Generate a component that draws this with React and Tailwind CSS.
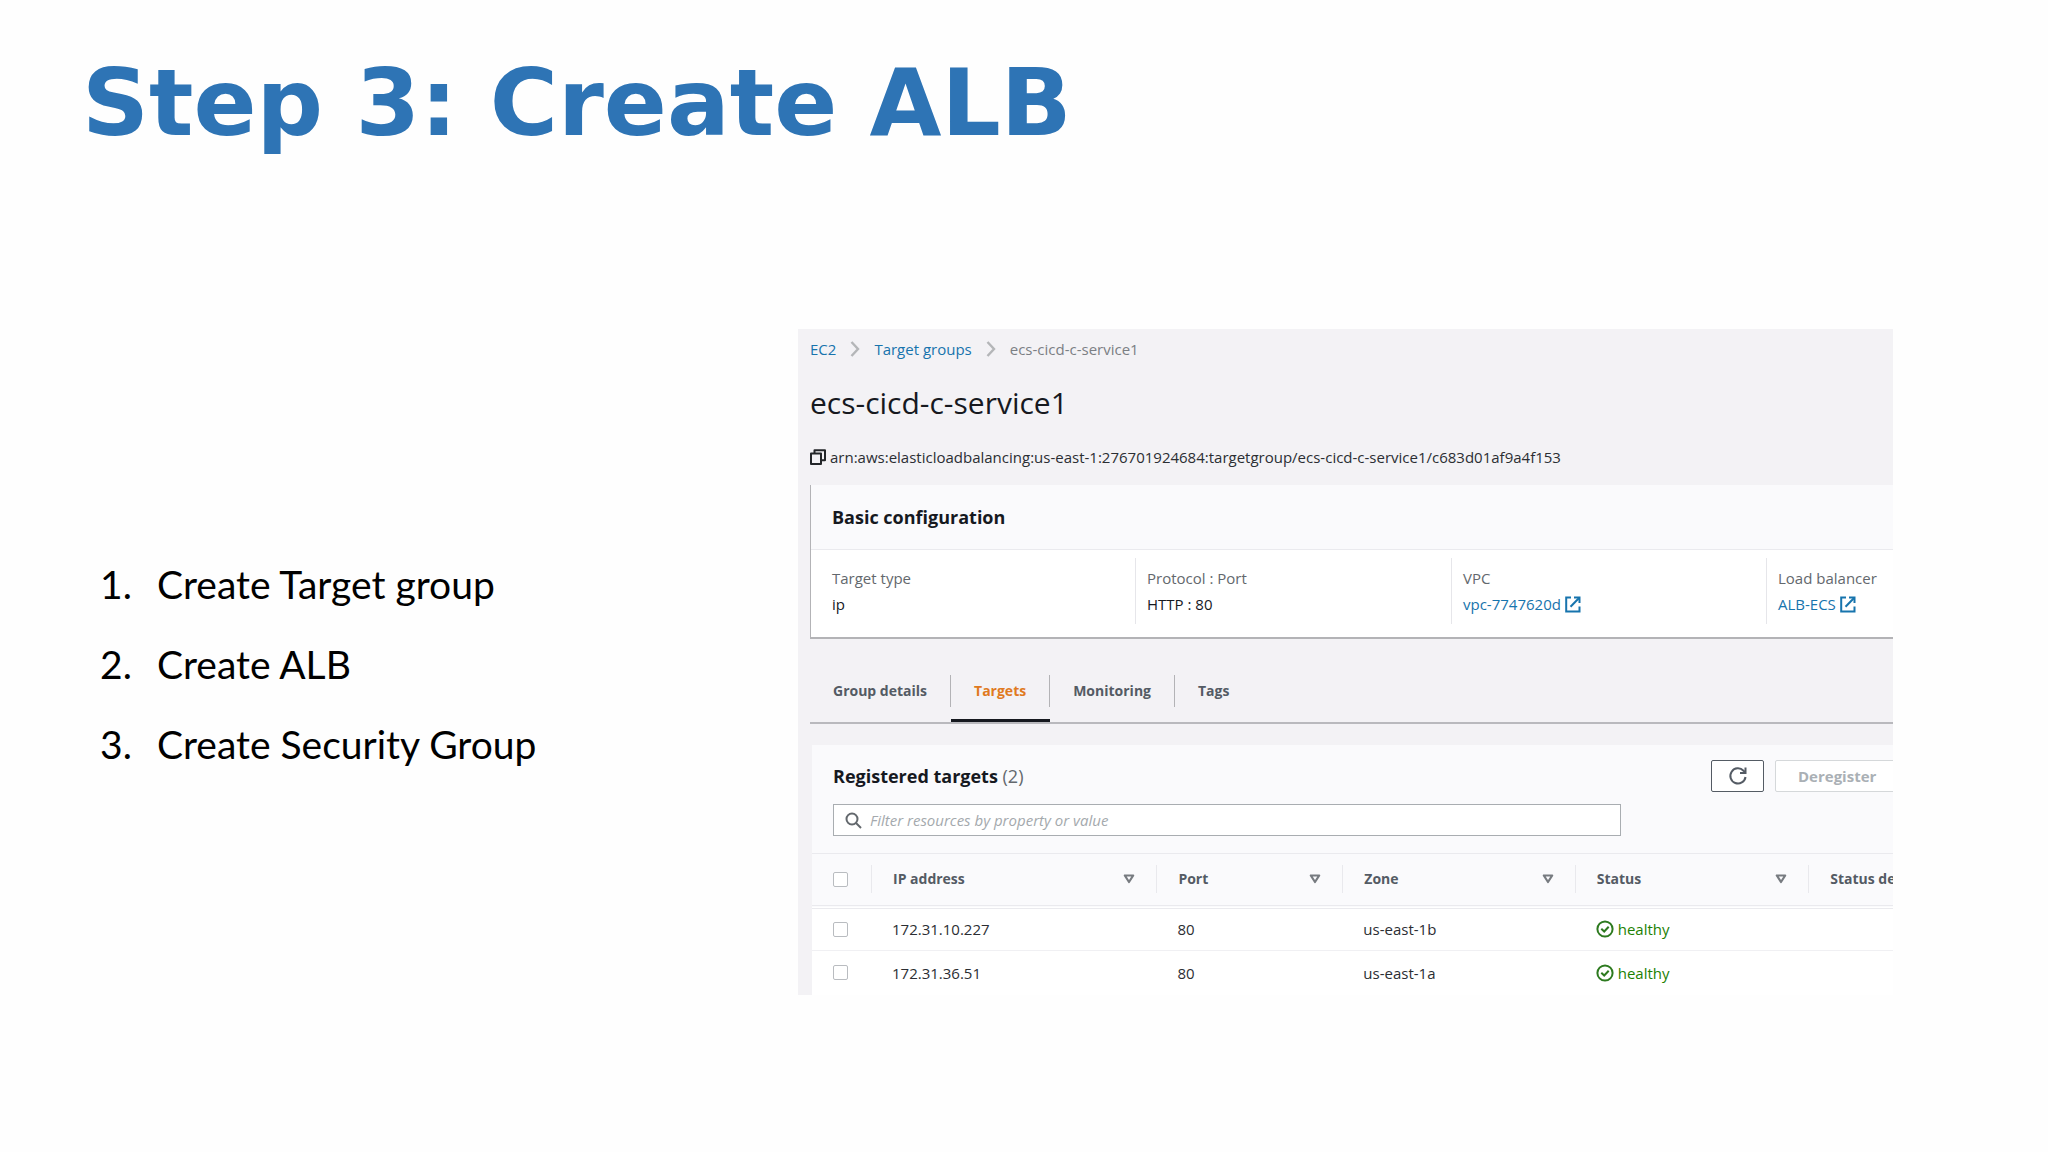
import React from 'react';

const steps = ['Create Target group', 'Create ALB', 'Create Security Group'];

const tabs = ['Group details', 'Targets', 'Monitoring', 'Tags'];

const targets = [
  { ip: '172.31.10.227', port: 80, zone: 'us-east-1b', status: 'healthy' },
  { ip: '172.31.36.51', port: 80, zone: 'us-east-1a', status: 'healthy' },
];

function ChevronIcon() {
  return (
    <svg width="10" height="18" viewBox="0 0 10 18" fill="none" stroke="#b4b6b8" strokeWidth="2.4" aria-hidden="true">
      <path d="M1.5 2L8 9L1.5 16" />
    </svg>
  );
}

function CopyIcon() {
  return (
    <svg width="16" height="16" viewBox="0 0 16 16" fill="none" stroke="#232629" strokeWidth="2" strokeLinejoin="round" aria-hidden="true">
      <path d="M1 4.5h10v10.5H1z" />
      <path d="M4.5 4.5V1.2H15v10h-4" />
    </svg>
  );
}

function ExternalIcon() {
  return (
    <svg width="16" height="17" viewBox="0 0 16 17" fill="none" stroke="currentColor" strokeWidth="2" aria-hidden="true">
      <path d="M6 1.5H1.2V15.5H14.5V10.5" />
      <path d="M9 1.5h5.5V7" />
      <path d="M14.3 1.7L5.5 10.7" />
    </svg>
  );
}

function RefreshIcon() {
  return (
    <svg width="20" height="20" viewBox="0 0 20 20" fill="none" stroke="#545b64" strokeWidth="2" aria-hidden="true">
      <path d="M17.5 11A7.6 7.6 0 1 1 15.5 4.7L17.3 6.7" />
      <path d="M17.5 1.5V7H12" />
    </svg>
  );
}

function SearchIcon() {
  return (
    <svg width="17" height="17" viewBox="0 0 17 17" fill="none" stroke="#63686d" strokeWidth="2" aria-hidden="true">
      <circle cx="7" cy="7" r="5.5" />
      <path d="M11 11L16 16" />
    </svg>
  );
}

function SortIcon() {
  return (
    <svg width="12" height="10" viewBox="0 0 12 10" fill="none" stroke="#777b80" strokeWidth="2.2" strokeLinejoin="round" aria-hidden="true">
      <path d="M1.8 1.5h8.4L6 8z" />
    </svg>
  );
}

function HealthyIcon() {
  return (
    <svg width="18" height="18" viewBox="0 0 18 18" fill="none" stroke="#2d7a1f" strokeWidth="2" aria-hidden="true">
      <circle cx="9" cy="9" r="7.6" />
      <path d="M5.3 8.8L8.2 11.5L12.7 6.7" />
    </svg>
  );
}

function Field({ label, children, first }) {
  return (
    <div className={first ? 'pb-2 pl-[21px]' : 'border-l border-[#e6e6ea] pb-2 pl-[11px]'}>
      <dt className="mt-2 text-[#63686d]">{label}</dt>
      <dd className="mt-0.5 text-[#16191f]">{children}</dd>
    </div>
  );
}

function FieldLink({ children }) {
  return (
    <a href="#" className="flex items-center gap-1 text-[#1774ad]">
      {children}
      <ExternalIcon />
    </a>
  );
}

function ColumnHead({ children, width, sortable = true }) {
  return (
    <th className={`${width} p-0 font-bold`}>
      <div className="flex h-7 items-center justify-between border-l border-[#e9e9ed] px-[21px]">
        {children}
        {sortable && <SortIcon />}
      </div>
    </th>
  );
}

function Checkbox({ label }) {
  return (
    <input
      type="checkbox"
      aria-label={label}
      className="block size-[15px] appearance-none rounded-xs border border-[#b9bcc0] bg-white"
    />
  );
}

function RegisteredTargets() {
  return (
    <section className="mt-[21px] ml-0.5 bg-[#fafafc]">
      <div className="flex items-start justify-between pt-[15px] pl-[21px]">
        <h3 className="text-lg leading-8 font-bold text-[#16191f]">
          Registered targets <span className="font-normal text-[#63686d]">(2)</span>
        </h3>
        <div className="-mr-6 flex shrink-0 gap-[11px]">
          <button aria-label="Refresh" className="flex h-8 w-[53px] items-center justify-center rounded-xs border border-[#545b64] bg-white">
            <RefreshIcon />
          </button>
          <button disabled className="h-8 w-[142px] rounded-xs border border-[#d5d8da] bg-white pl-[22px] text-left font-bold text-[#aab0b5]">
            Deregister
          </button>
        </div>
      </div>
      <div className="pt-3 pl-[21px]">
        <label className="flex h-8 w-[74.3%] items-center gap-2 border border-[#a9adb1] bg-white pl-[11px]">
          <SearchIcon />
          <input
            type="text"
            aria-label="Filter resources"
            placeholder="Filter resources by property or value"
            className="min-w-0 flex-1 italic outline-none placeholder:text-[#a4a9ad]"
          />
        </label>
      </div>
      <table className="mt-[17px] w-full table-fixed border-t border-[#eaeaee] text-left whitespace-nowrap">
        <thead className="text-sm text-[#545b64]">
          <tr className="h-[53px] border-b-4 border-double border-[#eaeaee]">
            <th className="w-[59px] p-0 pl-[21px]"><Checkbox label="Select all" /></th>
            <ColumnHead width="w-[26.4%]">IP address</ColumnHead>
            <ColumnHead width="w-[17.2%]">Port</ColumnHead>
            <ColumnHead width="w-[21.5%]">Zone</ColumnHead>
            <ColumnHead width="w-[21.6%]">Status</ColumnHead>
            <ColumnHead width="" sortable={false}>Status details</ColumnHead>
          </tr>
        </thead>
        <tbody className="bg-white text-[#2b2e33]">
          {targets.map((target) => (
            <tr key={target.ip} className="h-11 border-b border-[#f0f0f3] last:border-b-0">
              <td className="p-0 pl-[21px]"><Checkbox label={`Select ${target.ip}`} /></td>
              <td className="p-0 pl-[21px]">{target.ip}</td>
              <td className="p-0 pl-[21px]">{target.port}</td>
              <td className="p-0 pl-[21px]">{target.zone}</td>
              <td className="p-0 pl-[21px]">
                <span className="flex items-center gap-1 text-[#1d8102]">
                  <HealthyIcon />
                  {target.status}
                </span>
              </td>
              <td />
            </tr>
          ))}
        </tbody>
      </table>
    </section>
  );
}

function TargetGroupPanel() {
  return (
    <div className="min-w-0 overflow-hidden bg-[#f3f2f5] pl-3 font-['Open_Sans',sans-serif] text-[15px] leading-6">
      <nav className="flex items-center gap-3.5 pt-2" aria-label="Breadcrumb">
        <a href="#" className="text-[#1774ad]">EC2</a>
        <ChevronIcon />
        <a href="#" className="text-[#1774ad]">Target groups</a>
        <ChevronIcon />
        <span className="text-[#7b7f84]">ecs-cicd-c-service1</span>
      </nav>
      <h2 className="mt-[22px] text-3xl leading-10 text-[#16191f]">ecs-cicd-c-service1</h2>
      <p className="mt-[22px] flex items-center gap-1 text-[#2b2e33]">
        <CopyIcon />
        arn:aws:elasticloadbalancing:us-east-1:276701924684:targetgroup/ecs-cicd-c-service1/c683d01af9a4f153
      </p>

      <section className="mt-4 border-b-2 border-l border-[#b3b3b6] bg-white">
        <h3 className="border-b border-[#eaeaee] bg-[#fafafc] py-5 pl-[21px] text-lg leading-6 font-bold text-[#16191f]">
          Basic configuration
        </h3>
        <dl className="grid grid-cols-[324fr_316fr_315fr_127fr] pt-2 pb-[13px] whitespace-nowrap">
          <Field label="Target type" first>ip</Field>
          <Field label="Protocol : Port">HTTP : 80</Field>
          <Field label="VPC"><FieldLink>vpc-7747620d</FieldLink></Field>
          <Field label="Load balancer"><FieldLink>ALB-ECS</FieldLink></Field>
        </dl>
      </section>

      <div role="tablist" className="mt-9 flex border-b-2 border-[#b9b9bd] text-sm font-bold text-[#545b64]">
        {tabs.map((tab) => (
          <button
            key={tab}
            role="tab"
            aria-selected={tab === 'Targets'}
            className={
              tab === 'Targets'
                ? 'border-b-3 border-[#16191f] text-[#e07a1f]'
                : 'border-b-3 border-transparent'
            }
          >
            <span className={tab === 'Tags' ? 'mb-3 block px-[23px] leading-8' : 'mb-3 block border-r border-[#b3b3b6] px-[23px] leading-8'}>
              {tab}
            </span>
          </button>
        ))}
      </div>

      <RegisteredTargets />
    </div>
  );
}

export default function App() {
  return (
    <main className="min-h-screen bg-[#fefefe] pt-12 pb-10">
      <h1 className="pl-[82px] font-['DejaVu_Sans',sans-serif] text-[93px] leading-[110px] font-bold text-[#2e74b5]">
        Step 3: Create ALB
      </h1>
      <div className="mt-[171px] grid grid-cols-[798fr_1095fr] items-center pr-[155px]">
        <ol className="list-none pt-1 pl-[100px] font-['Lato',sans-serif] text-[39px] leading-[80px] text-black">
          {steps.map((step, index) => (
            <li key={step} className="flex">
              <span className="w-[57px]">{index + 1}.</span>
              {step}
            </li>
          ))}
        </ol>
        <TargetGroupPanel />
      </div>
    </main>
  );
}
